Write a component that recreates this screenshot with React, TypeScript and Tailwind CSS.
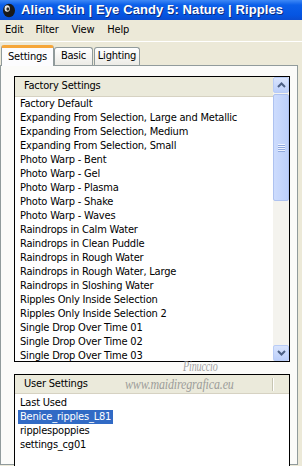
import React from "react";

const factory = [
  "Factory Default",
  "Expanding From Selection, Large and Metallic",
  "Expanding From Selection, Medium",
  "Expanding From Selection, Small",
  "Photo Warp - Bent",
  "Photo Warp - Gel",
  "Photo Warp - Plasma",
  "Photo Warp - Shake",
  "Photo Warp - Waves",
  "Raindrops in Calm Water",
  "Raindrops in Clean Puddle",
  "Raindrops in Rough Water",
  "Raindrops in Rough Water, Large",
  "Raindrops in Sloshing Water",
  "Ripples Only Inside Selection",
  "Ripples Only Inside Selection 2",
  "Single Drop Over Time 01",
  "Single Drop Over Time 02",
  "Single Drop Over Time 03",
];

const user = ["Last Used", "Benice_ripples_L81", "ripplespoppies", "settings_cg01"];

const ui = "font-['DejaVu_Sans_Condensed','Liberation_Sans',sans-serif]";

function Chevron({ up }: { up?: boolean }) {
  return (
    <svg width="9" height="6" viewBox="0 0 9 6">
      <path
        d={up ? "M1 5 L4.5 1.5 L8 5" : "M1 1 L4.5 4.5 L8 1"}
        fill="none"
        stroke="#4d6185"
        strokeWidth="2"
      />
    </svg>
  );
}

function ScrollButton({ up }: { up?: boolean }) {
  return (
    <div className="h-[16px] w-[16px] shrink-0 flex items-center justify-center rounded-[2px] border border-[#b9ccf6] bg-[linear-gradient(180deg,#d9e4fd,#bccffa)]">
      <Chevron up={up} />
    </div>
  );
}

function Scrollbar() {
  return (
    <div className="w-[16px] shrink-0 flex flex-col bg-[#f4f3ee]">
      <ScrollButton up />
      <div className="mt-[1px] h-[107px] rounded-[2px] border border-[#aec2f0] bg-[linear-gradient(90deg,#cddcfd,#bdd0fb)] flex flex-col items-center justify-center gap-[1px]">
        {[0, 1, 2, 3].map((i) => (
          <div key={i} className="w-[7px] h-[1px] bg-[#eef3ff] shadow-[0_1px_0_#8fa8de]" />
        ))}
      </div>
      <div className="flex-1" />
      <ScrollButton />
    </div>
  );
}

function AppIcon() {
  return (
    <svg width="14" height="15" viewBox="0 0 14 15" className="shrink-0">
      <ellipse cx="7" cy="7.5" rx="6" ry="6.8" fill="#1a1a1a" />
      <ellipse cx="5.2" cy="5.5" rx="2.6" ry="3.2" fill="#e8e8e8" />
      <ellipse cx="5.8" cy="6" rx="1.4" ry="1.8" fill="#2a2a2a" />
    </svg>
  );
}

export default function App() {
  return (
    <div className={`${ui} relative w-[302px] h-[466px] overflow-hidden bg-[#ece9d8] text-[11px] tracking-[-0.2px] text-black`}>
      {/* Title bar */}
      <div className="h-[20px] flex items-center gap-[5px] pl-[2px] bg-[linear-gradient(180deg,#3d88f6_0%,#0b5fe9_25%,#0555e2_75%,#0a4cd0_100%)]">
        <AppIcon />
        <span className="font-['Liberation_Sans',sans-serif] font-bold text-[13px] tracking-[0.1px] text-white whitespace-nowrap [text-shadow:1px_1px_0_#0a2a80]">
          Alien Skin | Eye Candy 5: Nature | Ripples
        </span>
      </div>

      {/* Menu bar */}
      <div className="h-[22px] flex items-center border-b border-white">
        <span className="ml-[5px]">Edit</span>
        <span className="ml-[12px]">Filter</span>
        <span className="ml-[13px]">View</span>
        <span className="ml-[13px]">Help</span>
      </div>

      {/* Tabs */}
      <div className="h-[22px] flex items-end pl-[1px] mt-[1px]">
        <div className="relative z-10 h-[21px] w-[53px] -mb-[1px] bg-[#fcfcfe] border-x border-[#919b9c] border-t-[3px] border-t-[#f5a63a] rounded-t-[3px] flex items-center justify-center">
          Settings
        </div>
        <div className="h-[18px] w-[39px] bg-[linear-gradient(180deg,#ffffff,#ecebe6)] border border-b-0 border-[#919b9c] rounded-t-[3px] flex items-center justify-center">
          Basic
        </div>
        <div className="h-[18px] w-[46px] ml-[1px] bg-[linear-gradient(180deg,#ffffff,#ecebe6)] border border-b-0 border-[#919b9c] rounded-t-[3px] flex items-center justify-center">
          Lighting
        </div>
      </div>

      {/* Panel */}
      <div className="w-[298px] h-[400px] border border-[#919b9c] bg-[#fbfbf9] pl-[13px] pt-[10px]">
        {/* Factory settings list */}
        <div className="w-[276px] h-[286px] border border-black flex overflow-hidden">
          <div className="flex-1 flex flex-col overflow-hidden">
            <div className="h-[20px] shrink-0 bg-[#ebeadb] border-b border-[#d6d2c2] flex items-center pl-[9px]">
              Factory Settings
            </div>
            <div className="bg-white flex-1 overflow-hidden">
              {factory.map((f) => (
                <div key={f} className="h-[14px] leading-[14px] pl-[5px] whitespace-nowrap">
                  {f}
                </div>
              ))}
            </div>
          </div>
          <Scrollbar />
        </div>

        {/* User settings list */}
        <div className="w-[276px] h-[120px] mt-[12px] border border-black bg-white">
          <div className="h-[19px] bg-[#ebeadb] border-b border-[#d6d2c2] flex items-center">
            <span className="pl-[9px] flex-1">User Settings</span>
            <div className="w-[1px] h-[13px] bg-[#c7c5b2] shadow-[1px_0_0_#ffffff] mr-[16px]" />
          </div>
          <div className="pt-[1px]">
            {user.map((u, i) => (
              <div key={u} className="h-[14px] pl-[3px]">
                <span
                  className={
                    i === 1
                      ? "inline-block h-[14px] leading-[14px] px-[2px] bg-[#316ac5] text-white"
                      : "inline-block h-[14px] leading-[14px] px-[2px]"
                  }
                >
                  {u}
                </span>
              </div>
            ))}
          </div>
        </div>
      </div>

      {/* Watermark */}
      <div className="absolute left-[183px] top-[356px] text-[14px] text-[#8a8a8a] opacity-80 scale-x-[0.72] origin-left font-['Liberation_Serif',serif] italic">
        Pinuccio
      </div>
      <div className="absolute left-[125px] top-[373px] text-[15px] text-[#8a8a8a] opacity-80 scale-x-[0.8] origin-left font-['Liberation_Serif',serif] italic whitespace-nowrap">
        www.maidiregrafica.eu
      </div>
    </div>
  );
}
